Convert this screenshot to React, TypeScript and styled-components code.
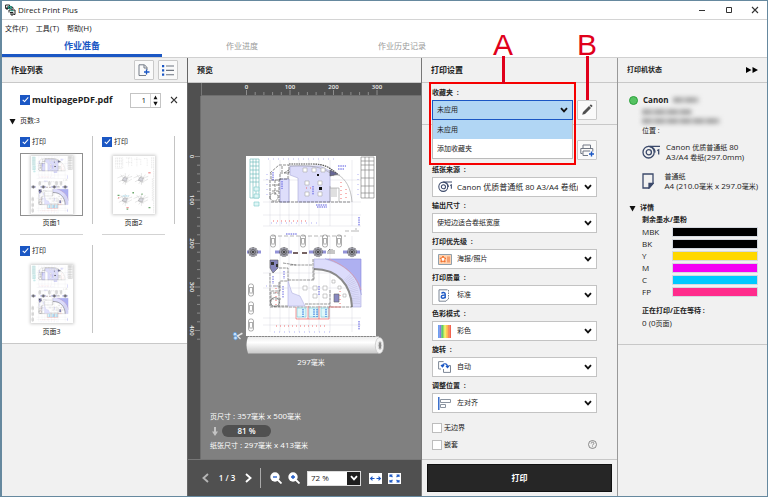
import React from "react";
import styled, { createGlobalStyle, css } from "styled-components";

const c = {
  blue: "#1b57c4",
  panel: "#f1f1f1",
  line: "#c8c8c8",
  dark: "#505050",
  text: "#222",
  navy: "#3c4a6b",
  red: "#e0001b",
};

const GlobalStyle = createGlobalStyle`
  *, *::before, *::after { box-sizing: border-box; }
  body { margin: 0; }
  body, button, input, select {
    font-family: "Open Sans", "Noto Sans CJK SC", sans-serif;
    font-size: 8px;
    line-height: 12px;
    color: ${c.text};
  }
  button { padding: 0; margin: 0; border: 0; background: none; }
  svg { display: block; flex: none; }
  ul { list-style: none; margin: 0; padding: 0; }
  h1, h2, h3, p { margin: 0; font-size: inherit; }
`;

const Window = styled.div`
  min-height: 100vh;
  display: flex;
  flex-direction: column;
  background: #fff;
  border: 1px solid #66899f;
  border-left-width: 2px;
`;

const TitleBar = styled.header`
  display: flex;
  align-items: center;
  gap: 2px;
  height: 19px;
  padding: 0 8px 0 3px;
  border-bottom: 1px solid #d4d4d4;
`;

const WindowTitle = styled.h1`
  flex: 1;
  font-weight: 400;
`;

const WindowButtons = styled.div`
  display: flex;
  gap: 17px;
`;

const MenuBar = styled.nav`
  display: flex;
  gap: 8px;
  height: 15px;
  padding: 1px 3px 0;
`;

const MenuItem = styled.button`
  font-size: 8px;
`;

const Tabs = styled.div`
  display: flex;
  height: 23px;
  border-bottom: 1px solid #d0d0d0;
`;

const Tab = styled.button<{ $active?: boolean }>`
  width: 160px;
  font-size: ${(p) => (p.$active ? "9px" : "8px")};
  font-weight: ${(p) => (p.$active ? 700 : 400)};
  color: ${(p) => (p.$active ? c.blue : "#9a9a9a")};
  border-bottom: 3px solid ${(p) => (p.$active ? c.blue : "transparent")};
  padding-top: 2px;
`;

const Panels = styled.main`
  flex: 1;
  display: grid;
  grid-template-columns: 185px minmax(0, 1fr) 196px 150px;
`;

const Panel = styled.section<{ $edge?: string }>`
  position: relative;
  display: flex;
  flex-direction: column;
  min-width: 0;
  background: ${c.panel};
  ${(p) => p.$edge && css`border-left: 1px solid ${p.$edge};`}
`;

const PanelHeader = styled.div`
  display: flex;
  align-items: center;
  gap: 4px;
  height: 25px;
  padding: 0 9px;
  border-bottom: 1px solid ${c.line};
`;

const PanelTitle = styled.h2<{ $small?: boolean }>`
  flex: 1;
  font-size: ${(p) => (p.$small ? "7px" : "8px")};
  font-weight: 700;
`;

const SquareButton = styled.button`
  display: flex;
  align-items: center;
  justify-content: center;
  flex: none;
  width: 20px;
  height: 20px;
  background: #fafafa;
  border: 1px solid #c9c9c9;
  border-radius: 1px;
`;

const JobList = styled.div`
  padding: 9px 9px 0 7px;
  height: 261px;
  background: #fff;
  border-bottom: 1px solid ${c.line};
  overflow: hidden;
`;

const FileRow = styled.div`
  display: flex;
  align-items: center;
  gap: 9px;
  height: 16px;
  padding-left: 11px;
`;

const CheckLabel = styled.label<{ $bold?: boolean }>`
  display: flex;
  align-items: center;
  gap: 2px;
  font-size: ${(p) => (p.$bold ? "9px" : "7px")};
  font-weight: ${(p) => (p.$bold ? 700 : 400)};
`;

const FileLabel = styled(CheckLabel)`
  flex: 1;
`;

const Check = styled.input.attrs({ type: "checkbox" })`
  appearance: none;
  display: flex;
  justify-content: center;
  flex: none;
  width: 10px;
  height: 10px;
  margin: 0;
  background: #fff;
  border: 1px solid #bdbdbd;
  &:checked { background: ${c.blue}; border-color: ${c.blue}; }
  &:checked::before {
    content: "";
    width: 3px;
    height: 6px;
    border: solid #fff;
    border-width: 0 1px 1px 0;
    transform: rotate(42deg);
  }
`;

const Stepper = styled.div`
  display: flex;
  width: 31px;
  height: 15px;
  border: 1px solid #c4c4c4;
`;

const CopiesInput = styled.input`
  width: 20px;
  border: 0;
  border-right: 1px solid #d5d5d5;
  padding: 0 4px;
  text-align: right;
`;

const StepButtons = styled.div`
  flex: 1;
  display: flex;
  flex-direction: column;
  align-items: center;
  justify-content: space-evenly;
`;

const StepButton = styled.button`
  line-height: 0;
`;

const Disclosure = styled.button<{ $bold?: boolean }>`
  display: flex;
  align-items: center;
  gap: 4px;
  height: 12px;
  font-size: 7px;
  font-weight: ${(p) => (p.$bold ? 700 : 400)};
`;

const PagesDisclosure = styled(Disclosure)`
  margin: 7px 0 9px;
`;

const ThumbGrid = styled.div`
  display: grid;
  grid-template-columns: 82px 82px;
  padding-left: 11px;
`;

const ThumbCell = styled.div`
  height: 109px;
`;

const ThumbBody = styled.div`
  width: 73px;
  height: 88px;
  border-right: 1px solid #c4c4c4;
  margin-bottom: 10px;
`;

const ThumbRule = styled.div`
  width: 63px;
  border-top: 1px solid #d3d3d3;
`;

const ThumbFrame = styled.div<{ $selected?: boolean }>`
  display: flex;
  justify-content: center;
  align-items: center;
  width: 63px;
  height: 63px;
  margin: 5px 0 1px;
  border: 1px solid ${(p) => (p.$selected ? "#909090" : "transparent")};
`;

const ThumbPaper = styled.div`
  background: #fff;
  box-shadow: 0 0 3px 1px #ccc;
`;

const ThumbName = styled.p`
  width: 63px;
  text-align: center;
  font-size: 7px;
`;

const Workspace = styled.div`
  flex: 1;
  display: grid;
  grid-template: 13px 1fr / 13px minmax(0, 1fr);
  background: ${c.dark};
  color: #fff;
`;

const RulerTop = styled.div`
  overflow: hidden;
  border-left: 1px solid #777;
  border-bottom: 1px solid #6e6e6e;
`;

const RulerSide = styled.div`
  overflow: hidden;
  border-right: 1px solid #6e6e6e;
`;

const Canvas = styled.div`
  display: flex;
  flex-direction: column;
  align-items: center;
  background: #808080;
  padding: 60px 0 7px;
`;

const Caption = styled.p`
  font-size: 8px;
  margin-top: 2px;
`;

const SizeInfo = styled.div`
  align-self: stretch;
  margin-top: auto;
  padding-left: 9px;
`;

const ScaleRow = styled.div`
  display: flex;
  align-items: center;
  gap: 4px;
  padding: 2px;
`;

const ScalePill = styled.div`
  width: 49px;
  border-radius: 6px;
  background: ${c.dark};
  text-align: center;
  font-weight: 600;
`;

const Toolbar = styled.div`
  display: flex;
  align-items: center;
  gap: 6px;
  height: 37px;
  padding: 0 12px 0 14px;
  border-top: 1px solid #777;
  background: ${c.dark};
  color: #fff;
`;

const PageCount = styled.span`
  width: 24px;
  text-align: center;
  font-weight: 600;
`;

const Divider = styled.div`
  height: 20px;
  border-left: 1px solid #aaa;
  margin: 0 3px 0 2px;
`;

const ZoomBox = styled.div`
  display: flex;
  align-items: center;
  position: relative;
  width: 54px;
  margin: 0 2px 0 1px;
`;

const ZoomSelect = styled.select`
  appearance: none;
  width: 100%;
  height: 15px;
  padding: 0 3px;
  border: 1px solid #ddd;
  border-radius: 0;
  background: linear-gradient(90deg, #fff 39px, #1e1e1e 39px);
`;

const SelectArrow = styled.span`
  position: absolute;
  right: 5px;
  pointer-events: none;
`;

const ZoomArrow = styled(SelectArrow)`
  right: 3px;
`;

const Section = styled.div`
  padding: 4px 20px 0 10px;
  border-bottom: 1px solid ${c.line};
`;

const FavouriteSection = styled(Section)`
  height: 42px;
`;

const SettingsSection = styled(Section)`
  flex: 1;
  padding-top: 15px;
`;

const PrinterRow = styled.div`
  display: flex;
  justify-content: flex-end;
  height: 24px;
`;

const FieldLabel = styled.label`
  display: block;
  font-size: 7px;
  font-weight: 700;
  line-height: 12px;
`;

const FieldRow = styled.div`
  display: flex;
  align-items: center;
  gap: 4px;
  margin-top: 1px;
`;

const Field = styled.div`
  padding-bottom: 3px;
`;

const SelectWrap = styled.div`
  position: relative;
  display: flex;
  align-items: center;
  margin-top: 1px;
`;

const SelectIcon = styled.span`
  position: absolute;
  left: 6px;
  pointer-events: none;
`;

const Select = styled.select<{ $icon?: boolean; $mixed?: boolean }>`
  appearance: none;
  width: 100%;
  height: 20px;
  padding: 0 18px 0 ${(p) => (p.$icon ? "24px" : "4px")};
  border: 1px solid #c3c3c3;
  border-radius: 0;
  background: #fff;
  font-size: ${(p) => (p.$mixed ? "8px" : "7px")};
`;

const ComboWrap = styled.div`
  position: relative;
  flex: 1;
`;

const Combo = styled.button`
  display: flex;
  align-items: center;
  justify-content: space-between;
  width: 100%;
  height: 20px;
  padding: 0 4px;
  border: 1px solid ${c.blue};
  background: #b1d6f4;
  font-size: 7px;
`;

const Menu = styled.ul`
  position: absolute;
  z-index: 1;
  top: 20px;
  left: 0;
  right: 0;
  background: #fff;
  border: 1px solid #bbb;
  border-top: 0;
`;

const MenuOption = styled.li<{ $active?: boolean }>`
  height: 19px;
  padding: 0 4px;
  font-size: 7px;
  line-height: 19px;
  background: ${(p) => (p.$active ? "#b1d6f4" : "#fff")};
`;

const OptionRow = styled.div`
  display: flex;
  justify-content: space-between;
  align-items: center;
  height: 17px;
`;

const Options = styled.div`
  padding: 3px 0;
`;

const Footer = styled.div`
  padding: 4px 5px;
`;

const PrintButton = styled.button`
  width: 100%;
  height: 28px;
  background: #262626;
  border: 1px solid #111;
  color: #fff;
  font-size: 8px;
  font-weight: 700;
`;

const Callout = styled.div<{ $left: number; $stem: number }>`
  position: absolute;
  z-index: 2;
  top: -28px;
  left: ${(p) => p.$left}px;
  width: 24px;
  text-align: center;
  font: 30px/30px "Liberation Sans", Arial, sans-serif;
  color: ${c.red};
  pointer-events: none;
  &::after {
    content: "";
    display: block;
    width: 3px;
    height: ${(p) => p.$stem}px;
    margin: -4px auto 0;
    background: ${c.red};
  }
`;

const Highlight = styled.div`
  position: absolute;
  z-index: 2;
  top: 24px;
  left: 7px;
  width: 147px;
  height: 83px;
  border: 2px solid #f50000;
  pointer-events: none;
`;

const StatusBody = styled.div`
  height: 262px;
  padding: 11px 9px 0 11px;
  border-bottom: 1px solid ${c.line};
`;

const PrinterName = styled.div`
  display: flex;
  align-items: center;
  gap: 5px;
  font-weight: 700;
`;

const StatusDot = styled.span`
  width: 9px;
  height: 9px;
  border-radius: 50%;
  background: #55c262;
  border: 1px solid #2ba23b;
`;

const Redacted = styled.span<{ $w: number }>`
  display: block;
  width: ${(p) => p.$w}px;
  height: 6px;
  background: repeating-linear-gradient(90deg, #aaa 0 9px, #c2c2c2 9px 13px);
  filter: blur(2px);
`;

const StatusIndent = styled.div`
  padding-left: 13px;
`;

const RedactedBlock = styled.div`
  display: grid;
  gap: 3px;
  padding: 3px 0 1px;
`;

const SmallText = styled.p<{ $bold?: boolean }>`
  font-size: 7px;
  font-weight: ${(p) => (p.$bold ? 700 : 400)};
`;

const Media = styled.div`
  display: flex;
  align-items: center;
  gap: 5px;
  height: 29px;
  line-height: 9px;
  white-space: nowrap;
`;

const MediaIcon = styled.span`
  display: flex;
  width: 19px;
`;

const MediaList = styled.div`
  padding-bottom: 7px;
`;

const Han = styled.span`
  font-size: 7px;
`;

const InkTable = styled.table`
  width: 100%;
  border-collapse: collapse;
  margin-bottom: 7px;
  th, td { padding: 0; height: 12px; line-height: 12px; }
  th { width: 30px; text-align: left; font-weight: 400; }
`;

const InkBar = styled.div<{ $color: string }>`
  height: 10px;
  border: 1px solid #d5d9e0;
  background: ${(p) => p.$color};
`;

const Chevron = ({ color = "#111" }: { color?: string }) => (
  <svg width="8" height="6" viewBox="0 0 8 6" fill="none" stroke={color} strokeWidth="1.8">
    <path d="M1 1.2 4 4.4 7 1.2" />
  </svg>
);

const Triangle = ({ up, size = 7 }: { up?: boolean; size?: number }) => (
  <svg width={size} height={size} viewBox="0 0 7 7" fill="#111">
    <path d={up ? "M.8 6 3.5.8 6.2 6z" : "M.5 1h6L3.5 6.5z"} />
  </svg>
);

const AppLogo = () => (
  <svg width="11" height="12" viewBox="0 0 11 12" fill="none" stroke="#222">
    <path d="M.6 1h4v3.5h-4zM2 6V3h5v3M7 2.5l1.5 2" />
    <path d="M3.5 2.5h2.8v2H3.5z" stroke="#169a82" />
    <path d="M4 8.5V6h6v4.5H8.5M5 8.5h3V11H6V8" />
    <path d="M5.5 6.8h3" stroke="#169a82" />
  </svg>
);

const RollIcon = ({ scale = 1 }: { scale?: number }) => (
  <svg width={18 * scale} height={14 * scale} viewBox="0 0 18 14" fill="none" stroke={c.navy} strokeWidth="1.3">
    <path d="M6.5 1.3H18M15.2 5.6l1.5-.8v4.8" />
    <ellipse cx="6.6" cy="7.2" rx="5.6" ry="5.8" />
    <circle cx="6.8" cy="7.2" r="2.6" />
    <path d="M8 1.5c3 .8 5 3 5 6" />
  </svg>
);

const SheetIcon = () => (
  <svg width="12" height="16" viewBox="0 0 12 16" fill="none" stroke={c.navy} strokeWidth="1.3">
    <path d="M1 1h10v9.5L7 15H1z" />
    <path d="M7 15v-4.5h4z" fill={c.navy} />
  </svg>
);

const PosterIcon = () => (
  <svg width="14" height="11" viewBox="0 0 14 11">
    <path d="M.5.5h13v10H.5z" fill="#ffd2b0" stroke="#8fa0ad" />
    <path d="m5 2 1 2 2 .3-1.4 1.4.5 2.3L5 7 3 8l.4-2.3L2 4.3 4 4z" fill="#fff" stroke="#f0661e" />
    <path d="M9 2.5h3v6H9z" fill="#f5a070" />
  </svg>
);

const QualityIcon = () => (
  <svg width="12" height="13" viewBox="0 0 12 13" fill="none">
    <path d="M1 .8h8.5M1 .8v11.4h7l2-2" stroke="#7d8796" />
    <path d="M10.5 1v10" stroke="#7d8796" strokeDasharray="1.5 1" />
    <path d="M3.6 4.5c.6-1.4 3.6-1.4 3.6.5v4.2M7.2 6.2C5 6 3.3 6.500 3.300 7.900c0 1.800 3 1.700 3.900 0" stroke={c.blue} strokeWidth="1.4" />
  </svg>
);

const SPECTRUM = ["#6aa0f0", "#8a78e0", "#55c873", "#a5e05a", "#f8ee60", "#fbc04a", "#fa8f52", "#f2634f"];

const ColorIcon = () => (
  <svg width="13" height="13" viewBox="0 0 16 16">
    {SPECTRUM.map((fill, i) => (
      <rect key={fill} x={i * 2} width="2.2" height="16" fill={fill} />
    ))}
  </svg>
);

const RotateIcon = () => (
  <svg width="13" height="12" viewBox="0 0 13 12" fill="none" stroke="#7d8796">
    <path d="M3 8H.6V.6h5M5.500 11.400h7V4.500h-2M5.500 11.400V8" />
    <path d="M4.500 5c0-3 5-3.300 5 1M8 4.800l1.500 1.800L11 4.800M3 4l1.500 1.800L6 4" stroke={c.blue} strokeWidth="1.2" />
  </svg>
);

const AlignIcon = () => (
  <svg width="13" height="13" viewBox="0 0 13 13" fill="none" stroke="#8b94a0">
    <path d="M.8 0v13" stroke={c.blue} strokeWidth="1.3" />
    <path d="M2.500 2.500h10v3h-10zM2.500 7.500h5v3h-5z" />
  </svg>
);

const PencilIcon = () => (
  <svg width="12" height="12" viewBox="0 0 12 12" fill={c.dark}>
    <path d="M1.200 10.800 2 8l6-6 2 2-6 6zM8.600 1.500l1-1c.6-.4 2.300 1.200 1.800 1.800l-1 1z" />
  </svg>
);

const AddPrinterIcon = () => (
  <svg width="14" height="13" viewBox="0 0 14 13" fill="none" stroke="#707784">
    <path d="M3 4V1h7.500v3M2.500 9.500H.8v-5h12v3M3 7h7M3 7v4.500h5" />
    <path d="M11.500 7.500v5M9 10h5" stroke={c.blue} strokeWidth="1.4" />
  </svg>
);

const AddFileIcon = () => (
  <svg width="12" height="13" viewBox="0 0 12 13" fill="none" stroke="#737b86">
    <path d="M8 11.500H1V.8h5.500L9 3.500V6M6 1v3h3" />
    <path d="M8.500 5.500v5M6 8h5.500" stroke={c.blue} strokeWidth="1.300" />
  </svg>
);

const ListIcon = () => (
  <svg width="12" height="11" viewBox="0 0 12 11">
    <path d="M0 0h2.200v2.200H0zM0 4.300h2.200v2.200H0zM0 8.600h2.200v2.200H0z" fill={c.blue} />
    <path d="M4 1h8M4 5.400h8M4 9.700h8" stroke="#6d7480" strokeWidth="1.100" />
  </svg>
);

const CloseIcon = ({ size = 8 }: { size?: number }) => (
  <svg width={size} height={size} viewBox="0 0 8 8" stroke="#333" strokeWidth="1.1">
    <path d="m1 1 6 6M7 1 1 7" />
  </svg>
);

const HelpIcon = () => (
  <svg width="9" height="9" viewBox="0 0 18 18" fill="none" stroke="#777" strokeWidth="1.700">
    <circle cx="9" cy="9" r="8" />
    <path d="M6.300 7c0-3.600 5.400-3.600 5.400-.2C11.700 9 9 9 9 11M9 12.800v1.600" />
  </svg>
);

const Magnifier = ({ plus }: { plus?: boolean }) => (
  <svg width="12" height="12" viewBox="0 0 12 12">
    <path d="m8 8 3.500 3.500" stroke="#fff" strokeWidth="1.800" />
    <circle cx="5" cy="5" r="4.700" fill="#fff" />
    <path d={plus ? "M3 5h4M5 3v4" : "M3 5h4"} stroke={c.blue} strokeWidth="1.300" />
  </svg>
);

const FitIcon = ({ all }: { all?: boolean }) => (
  <svg width="13" height="11" viewBox="0 0 13 11">
    <path d="M0 0h13v11H0z" fill="#fff" />
    <path
      fill="none"
      stroke={c.blue}
      strokeWidth="1.100"
      d={
        all
          ? "M2 4V2h2.500M2.200 2.200 4.500 4M11 4V2H8.500M10.800 2.200 8.500 4M2 7v2h2.500M2.200 8.800 4.500 7M11 7v2H8.500M10.800 8.800 8.500 7"
          : "M1.500 5.500h4M3.500 3.700 1.600 5.500l1.900 1.800M11.500 5.500h-4M9.500 3.700l1.900 1.800-1.900 1.800"
      }
    />
  </svg>
);

const PageArrow = ({ next }: { next?: boolean }) => (
  <svg width="7" height="10" viewBox="0 0 7 10" fill="none" stroke={next ? "#fff" : "#b5b5b5"} strokeWidth="1.900">
    <path d={next ? "m1 1 4.500 4L1 9" : "M6 1 1.500 5 6 9"} />
  </svg>
);

const Tree = ({ x }: { x: number }) => (
  <g transform={`translate(${x} 96)`} fill="none" stroke="#555" strokeWidth=".7">
    <circle r="4.500" fill="#aaaab8" strokeDasharray="1 .6" />
    <circle r="2.600" />
    <path d="M-4-4 4 4M4-4-4 4M0-5V5M-5 0H5" strokeWidth=".4" />
    <circle r="1" fill="#222" />
  </g>
);

const Car = ({ x, y }: { x: number; y: number }) => (
  <g transform={`translate(${x} ${y})`} fill="none" stroke="#777" strokeWidth=".6">
    <rect x="-2.500" y="-6" width="5" height="12" rx="2" />
    <path d="M-2-2.500h4M-1.800 3h3.600M-1.500-2v4.500M1.500-2v4.500" />
  </g>
);

const FloorPlan = ({ width }: { width: number }) => (
  <svg width={width} height={Math.round((width * 180) / 130)} viewBox="0 0 130 180" fill="none" stroke="#666" strokeWidth=".6">
    <path stroke="#cfcfd8" strokeWidth=".4" d="M17 24h98M17 46h98M24 4v66M34 4v66M43 4v66M53 4v66M63 4v66M73 4v66M84 4v66M106 4v66M17 59h98M17 70h98M24 80v96M34 80v96M43 80v96M53 80v96M63 80v96M73 80v96M84 80v96M106 80v96M17 117h98M17 132h98M17 162h98M17 169h98" />
    <path stroke="#63b5b5" d="M4 3h9v39H4zM7 3v39M10 3v39M4 6h9M4 10h9M4 14h9M4 18h9M4 22h9M4 26h9" />
    <path stroke="#7ccaca" fill="#dff6f6" d="M8 31h5v4H8zM8 38h5v4H8zM8 46h5v4H8z" />
    <path d="M115 1h13v41h-13zM119 1v41M123 1v41M115 5h13M115 9h13M115 14h13M115 22h13M115 30h13M115 37h13" stroke="#777" />
    <path d="M44 10h30l10 5v31H52V22l-8-3z" fill="#dcdcfa" stroke="#a9a9d6" />
    <path d="M34 23h9v23h-9z" fill="#dedefb" stroke="#8888c8" />
    <path stroke="#555" strokeWidth="1.200" strokeDasharray="1.600 .8" d="M43 8h24c10 0 17 3 24 10" />
    <path stroke="#999" d="M91 18c9 5 14 14 15 28M44 10c20-1 33 0 44 10M84 19h10M84 30v16M84 32h9v14M86 32v9M88 32v9M90 32v9" />
    <path fill="#686897" stroke="#555" d="m84 14 8 4-8 2z" />
    <path stroke="#444" d="M24 17l9-8h10v8h-9v7h-9v-7M24 24v20M26 29h7M26 35h7M29 24v16M25 46h80M33 46V23h9v-9M36 10v6M38 17l5-3" strokeDasharray="3 1" />
    <circle cx="28" cy="41" r="4" strokeDasharray="1 .5" stroke="#333" />
    <path fill="#fff" stroke="#aaa" d="M59 25h4v4h-4zM72 25h4v4h-4zM59 36h4v4h-4zM72 36h4v4h-4zM57 12h4v4h-4zM66 12h4v4h-4zM75 12h4v4h-4z" />
    <path fill="#111" stroke="none" d="M73 31h3v3h-3zM71 18h2v2h-2z" />
    <path stroke="#5555e0" strokeDasharray="1.500 .8" d="M27 16v9M36 25v8M67 30v9M92 10h8M92 13h6M70 49h11M71 51h10M113 61v9M113 165v9M40 78h11" strokeWidth="1" />
    <path stroke="#7b7bee" strokeDasharray="1 4" d="M22 3h70M21 18v24M112 18v24M25 67h50M20 130h14M110 118v34M28 176h60" />
    <path stroke="#f04a4a" strokeDasharray="1 3" d="M95 26v18M60 32h5M27 65h35M100 33v9M30 132v19M94 131v18M30 170h50" strokeWidth=".8" />
    <path stroke="#888" d="M99 75h14M110 72v6M26 80h74" strokeDasharray="4 2" />
    <Car x={27} y={85} /><Car x={57} y={85} /><Car x={79} y={85} /><Car x={93} y={85} />
    <path stroke="#9292d7" strokeWidth="3" d="M1 96h14M29 96h17M63 96h17M97 96h17" />
    <path stroke="#4a3030" strokeWidth="1.300" strokeDasharray="5 4" d="M47 97h16" />
    <path stroke="#444" d="M82 98v-3l2-2v5M86 98v-5M88 98v-4" />
    <Tree x={7} /><Tree x={38} /><Tree x={72} /><Tree x={106} />
    <path fill="#aeb0f1" stroke="#8686dc" d="M79 103h36v36c-2-16-13-30-36-36z" />
    <path fill="#dcdcfb" stroke="#a9a9dc" d="M68 103h11c23 6 34 20 36 36v12h-9c-1-23-15-38-38-38z" />
    <path stroke="#8787ad" strokeDasharray=".6 1.200" strokeWidth="8" d="M110 148c0-11-3-21-9-27" opacity=".25" />
    <path stroke="#8a8a8a" strokeWidth="2" d="M68 113c24 0 37 16 38 38" />
    <path stroke="#e99" d="M83 103c20 8 29 20 32 31" />
    <path fill="#8787bd" stroke="#555" d="M24 104h8v8l-5 5-3-5z" />
    <path fill="#333" stroke="none" d="M25 106h3v3h-3zM30 108h2v3h-2z" />
    <path stroke="#555" d="M33 112h9v13h-8v10h-9v15M24 117v33M42 150H25M42 124h26v-12M44 109h22M67 103v21M84 134v17M24 151h82M59 148h25M37 107l13 2M33 126v25M27 130h7M27 137h7M25 143h10" strokeDasharray="3 .8" />
    <path fill="#e1e1fc" stroke="#b0b0df" d="M42 125v25h17l-5-10-8-3z" />
    <circle cx="29" cy="146" r="4.500" stroke="#333" strokeDasharray="1.500 .6" />
    <path fill="#fff" stroke="#aaa" d="M57 130h4v4h-4zM67 130h4v4h-4zM77 130h4v4h-4zM67 138h4v4h-4zM77 138h4v4h-4zM86 124h3v3h-3zM92 130h3v3h-3zM97 138h3v3h-3z" />
    <path fill="#8888c0" d="M88 138h5v8h-5z" />
    <path stroke="#6666de" strokeDasharray="1.500 1" d="M27 120v8M37 130v12M73 130v10M38 115v8" strokeWidth="1" />
    <path fill="#e0f8fb" stroke="#70c8d5" d="M51 152h9v9h-9zM63 152h9v9h-9zM75 152h8v9h-8z" />
    <path stroke="#e55" d="M50 151v12h33v-12h12M62 150v13M73 150v13" />
    <path stroke="#347ae0" strokeDasharray="1.500 .8" d="M57 153v8M68 153v8M71 153v8M80 153v8" strokeWidth="1.200" />
    <Car x={5} y={134} /><Car x={5} y={152} /><Car x={5} y={169} />
  </svg>
);

const CLUSTERS = [
  [38, 72], [88, 72], [38, 136], [88, 136],
];

const DetailPlan = ({ width }: { width: number }) => (
  <svg width={width} height={Math.round((width * 180) / 130)} viewBox="0 0 130 180" fill="none" stroke="#888" strokeWidth=".8">
    <path stroke="#bbb" d="M8 6h22v32H8zM14 6v32M20 6v32M26 6v32M8 15h22M8 24h22M40 6h18v26M48 6v26M66 10h20v20M74 4v28M96 8h10v24M40 20h18" strokeDasharray="3 2" />
    <path stroke="#aaa" strokeDasharray="5 2" d="M120 4v36M126 4v172M122 70v70" />
    {CLUSTERS.map(([x, y]) => (
      <g key={`${x}-${y}`} transform={`translate(${x} ${y})`}>
        <path strokeDasharray="3 1" d="M-24-4-5-12 4-3l18-6M-20 8-8 2 2 10l18-10M-14-14l20 26M12-14-8 14M0-18v10M0 8v10" />
        <path stroke="#666" fill="#d5d5dc" d="m-10 4 6-10 10 3-3 9z" />
        <circle r="8" strokeDasharray="2 1.500" />
      </g>
    ))}
    <path stroke="#e77" strokeWidth="4" d="M110 52h6M42 160h6M16 130h3" strokeDasharray="3 1" />
    <path stroke="#6da86d" strokeWidth="4" d="M14 122h6M60 114h5M110 160h6M42 165h5M88 118h4" />
    <path stroke="#8cd0e8" strokeWidth="3" d="M30 124h18" strokeDasharray="3 2" />
  </svg>
);

const PaperRoll = () => (
  <svg width="138" height="18" viewBox="0 0 138 18">
    <defs>
      <linearGradient id="roll" x2="0" y2="1">
        <stop offset="0" stopColor="#ececec" />
        <stop offset=".35" stopColor="#fff" />
        <stop offset="1" stopColor="#c8c8c8" />
      </linearGradient>
    </defs>
    <path d="M2 .5h131v17H2Q-1 9 2 .5z" fill="url(#roll)" />
    <path d="M1 .5h129" stroke="#888" strokeDasharray="2 1" />
    <ellipse cx="133.500" cy="9.500" rx="4.200" ry="8" fill="#f2f2f2" stroke="#bbb" strokeWidth=".6" />
    <ellipse cx="134" cy="9.500" rx="1.800" ry="4" fill="#8a8a8a" stroke="#ddd" />
  </svg>
);

const Sheet = styled.div`
  background: #fff;
`;

const RollHolder = styled.div`
  position: relative;
  width: 130px;
`;

const CutMark = styled.span`
  position: absolute;
  left: -14px;
  top: -5px;
`;

const Scissors = () => (
  <svg width="11" height="10" viewBox="0 0 11 10">
    <path d="m4 5 6-3.500.8 1.500-6 3z" fill="#e8e8e8" />
    <path d="M4 3.500 8.500 8" stroke="#ddd" strokeWidth="1.300" />
    <circle cx="3" cy="3.200" r="1.800" fill="#c9e2fb" stroke="#5b9ce0" strokeWidth=".8" />
    <circle cx="3.500" cy="7" r="1.800" fill="#c9e2fb" stroke="#5b9ce0" strokeWidth=".8" />
  </svg>
);

const RulerLabel = styled.text`
  font-size: 6px;
  font-weight: 600;
  fill: #f0f0f0;
  text-anchor: middle;
`;

const MARKS = Array.from({ length: 20 }, (_, i) => i * 20);

const HorizontalRuler = () => (
  <svg width="220" height="12" viewBox="0 0 220 12">
    {MARKS.filter((m) => m <= 300).map((m) => (
      <path key={m} d={`M${44.5 + m * 0.435} 12v${m % 100 ? -3 : -5}`} stroke="#8d8d8d" />
    ))}
    {[0, 100, 200, 300].map((m) => (
      <RulerLabel key={m} x={44.5 + m * 0.435} y="6">{m}</RulerLabel>
    ))}
  </svg>
);

const VerticalRuler = () => (
  <svg width="12" height="260" viewBox="0 0 12 260">
    {[...MARKS, 400, 420].map((m) => (
      <path key={m} d={`M12 ${60.5 + m * 0.435}h${m % 100 ? -3 : -5}`} stroke="#8d8d8d" />
    ))}
    {[0, 100, 200, 300, 400].map((m) => (
      <RulerLabel key={m} transform={`translate(2 ${60.5 + m * 0.435}) rotate(90)`}>{m}</RulerLabel>
    ))}
  </svg>
);

const PAGES = [
  { name: "页面1", plan: "floor", selected: true },
  { name: "页面2", plan: "detail" },
  { name: "页面3", plan: "floor" },
];

const FIELDS = [
  { id: "source", label: "纸张来源", value: "Canon 优质普通纸 80 A3/A4 卷纸(297.0mm)", icon: <RollIcon scale={0.8} />, mixed: true },
  { id: "size", label: "输出尺寸", value: "使短边适合卷纸宽度" },
  { id: "priority", label: "打印优先级", value: "海报/照片", icon: <PosterIcon /> },
  { id: "quality", label: "打印质量", value: "标准", icon: <QualityIcon /> },
  { id: "color", label: "色彩模式", value: "彩色", icon: <ColorIcon /> },
  { id: "rotate", label: "旋转", value: "自动", icon: <RotateIcon /> },
  { id: "align", label: "调整位置", value: "左对齐", icon: <AlignIcon /> },
];

const INKS = [
  ["MBK", "#000"], ["BK", "#000"], ["Y", "#ffd800"],
  ["M", "#f400f4"], ["C", "#00c8ff"], ["FP", "#ff2c8c"],
];

export default function App() {
  return (
    <Window>
      <GlobalStyle />
      <TitleBar>
        <AppLogo />
        <WindowTitle>Direct Print Plus</WindowTitle>
        <WindowButtons>
          <button aria-label="最小化">
            <svg width="10" height="8" viewBox="0 0 10 8" stroke="#333"><path d="M2 4.500h6" /></svg>
          </button>
          <button aria-label="最大化">
            <svg width="10" height="8" viewBox="0 0 10 8" fill="none" stroke="#333"><path d="M2.500 1.500h5v5h-5z" /></svg>
          </button>
          <button aria-label="关闭"><CloseIcon /></button>
        </WindowButtons>
      </TitleBar>
      <MenuBar>
        <MenuItem><Han>文件</Han>(F)</MenuItem>
        <MenuItem><Han>工具</Han>(T)</MenuItem>
        <MenuItem><Han>帮助</Han>(H)</MenuItem>
      </MenuBar>
      <Tabs role="tablist">
        <Tab role="tab" aria-selected="true" $active>作业准备</Tab>
        <Tab role="tab" aria-selected="false">作业进度</Tab>
        <Tab role="tab" aria-selected="false">作业历史记录</Tab>
      </Tabs>

      <Panels>
        <Panel>
          <PanelHeader>
            <PanelTitle>作业列表</PanelTitle>
            <SquareButton aria-label="添加文件"><AddFileIcon /></SquareButton>
            <SquareButton aria-label="列表"><ListIcon /></SquareButton>
          </PanelHeader>
          <JobList>
            <FileRow>
              <FileLabel $bold><Check defaultChecked />multipagePDF.pdf</FileLabel>
              <Stepper>
                <CopiesInput aria-label="份数" defaultValue="1" />
                <StepButtons>
                  <StepButton aria-label="增加"><Triangle up size={5} /></StepButton>
                  <StepButton aria-label="减少"><Triangle size={5} /></StepButton>
                </StepButtons>
              </Stepper>
              <button aria-label="删除"><CloseIcon /></button>
            </FileRow>
            <PagesDisclosure aria-expanded="true"><Triangle />页数:3</PagesDisclosure>
            <ThumbGrid>
              {PAGES.map((page) => (
                <ThumbCell key={page.name}>
                  <ThumbBody>
                    <CheckLabel><Check defaultChecked />打印</CheckLabel>
                    <ThumbFrame $selected={page.selected}>
                      <ThumbPaper>
                        {page.plan === "floor" ? <FloorPlan width={42} /> : <DetailPlan width={42} />}
                      </ThumbPaper>
                    </ThumbFrame>
                    <ThumbName>{page.name}</ThumbName>
                  </ThumbBody>
                  <ThumbRule />
                </ThumbCell>
              ))}
            </ThumbGrid>
          </JobList>
        </Panel>

        <Panel $edge="#666">
          <PanelHeader><PanelTitle>预览</PanelTitle></PanelHeader>
          <Workspace>
            <div />
            <RulerTop><HorizontalRuler /></RulerTop>
            <RulerSide><VerticalRuler /></RulerSide>
            <Canvas>
              <Sheet><FloorPlan width={130} /></Sheet>
              <RollHolder>
                <PaperRoll />
                <CutMark><Scissors /></CutMark>
              </RollHolder>
              <Caption>297<Han>毫米</Han></Caption>
              <SizeInfo>
                <p><Han>页尺寸</Han> : 357<Han>毫米</Han> x 500<Han>毫米</Han></p>
                <ScaleRow>
                  <svg width="6" height="9" viewBox="0 0 6 9" fill="#c4c4c4"><path d="M2 0h2v4.500h2L3 9 0 4.500h2z" /></svg>
                  <ScalePill>81 %</ScalePill>
                </ScaleRow>
                <p><Han>纸张尺寸</Han> : 297<Han>毫米</Han> x 413<Han>毫米</Han></p>
              </SizeInfo>
            </Canvas>
          </Workspace>
          <Toolbar>
            <button aria-label="上一页"><PageArrow /></button>
            <PageCount>1 / 3</PageCount>
            <button aria-label="下一页"><PageArrow next /></button>
            <Divider />
            <button aria-label="缩小"><Magnifier /></button>
            <button aria-label="放大"><Magnifier plus /></button>
            <ZoomBox>
              <ZoomSelect aria-label="缩放"><option>72 %</option></ZoomSelect>
              <ZoomArrow><Chevron color="#fff" /></ZoomArrow>
            </ZoomBox>
            <button aria-label="适合宽度"><FitIcon /></button>
            <button aria-label="适合窗口"><FitIcon all /></button>
          </Toolbar>
        </Panel>

        <Panel $edge="#777">
          <PanelHeader><PanelTitle>打印设置</PanelTitle></PanelHeader>
          <FavouriteSection>
            <FieldLabel as="div" id="fav-label">收藏夹&nbsp; :</FieldLabel>
            <FieldRow>
              <ComboWrap>
                <Combo aria-haspopup="listbox" aria-expanded="true" aria-labelledby="fav-label">
                  未应用<Chevron />
                </Combo>
                <Menu role="listbox" aria-labelledby="fav-label">
                  <MenuOption role="option" aria-selected="true" $active>未应用</MenuOption>
                  <MenuOption role="option" aria-selected="false">添加收藏夹</MenuOption>
                </Menu>
              </ComboWrap>
              <SquareButton aria-label="编辑"><PencilIcon /></SquareButton>
            </FieldRow>
          </FavouriteSection>
          <SettingsSection>
            <PrinterRow>
              <SquareButton aria-label="添加打印机"><AddPrinterIcon /></SquareButton>
            </PrinterRow>
            {FIELDS.map((f) => (
              <Field key={f.id}>
                <FieldLabel htmlFor={f.id}>{f.label}&nbsp; :</FieldLabel>
                <SelectWrap>
                  {f.icon && <SelectIcon>{f.icon}</SelectIcon>}
                  <Select id={f.id} $icon={!!f.icon} $mixed={f.mixed}>
                    <option>{f.value}</option>
                  </Select>
                  <SelectArrow><Chevron /></SelectArrow>
                </SelectWrap>
              </Field>
            ))}
            <Options>
              <OptionRow><CheckLabel><Check />无边界</CheckLabel></OptionRow>
              <OptionRow>
                <CheckLabel><Check />嵌套</CheckLabel>
                <button aria-label="说明"><HelpIcon /></button>
              </OptionRow>
            </Options>
          </SettingsSection>
          <Footer><PrintButton>打印</PrintButton></Footer>
          <Highlight />
          <Callout $left={69} $stem={28}>A</Callout>
          <Callout $left={153} $stem={44}>B</Callout>
        </Panel>

        <Panel $edge="#999">
          <PanelHeader>
            <PanelTitle $small>打印机状态</PanelTitle>
            <button aria-label="折叠">
              <svg width="12" height="6" viewBox="0 0 12 6"><path d="M0 0v6l5.500-3zM6.500 0v6L12 3z" /></svg>
            </button>
          </PanelHeader>
          <StatusBody>
            <PrinterName><StatusDot />Canon<Redacted $w={26} /></PrinterName>
            <StatusIndent>
              <RedactedBlock><Redacted $w={50} /><Redacted $w={78} /></RedactedBlock>
              <SmallText>位置 :</SmallText>
              <MediaList>
                <Media>
                  <MediaIcon><RollIcon /></MediaIcon>
                  <p>Canon <Han>优质普通纸</Han> 80<br />A3/A4 <Han>卷纸</Han>(297.0mm)</p>
                </Media>
                <Media>
                  <MediaIcon><SheetIcon /></MediaIcon>
                  <p><Han>普通纸</Han><br />A4 (210.0<Han>毫米</Han> x 297.0<Han>毫米</Han>)</p>
                </Media>
              </MediaList>
            </StatusIndent>
            <Disclosure $bold aria-expanded="true"><Triangle />详情</Disclosure>
            <StatusIndent>
              <SmallText $bold>剩余墨水/墨粉</SmallText>
              <InkTable>
                <tbody>
                  {INKS.map(([name, color]) => (
                    <tr key={name}>
                      <th scope="row">{name}</th>
                      <td><InkBar $color={color} /></td>
                    </tr>
                  ))}
                </tbody>
              </InkTable>
              <SmallText $bold>正在打印/正在等待 :</SmallText>
              <p>0 (0<Han>页面</Han>)</p>
            </StatusIndent>
          </StatusBody>
        </Panel>
      </Panels>
    </Window>
  );
}
